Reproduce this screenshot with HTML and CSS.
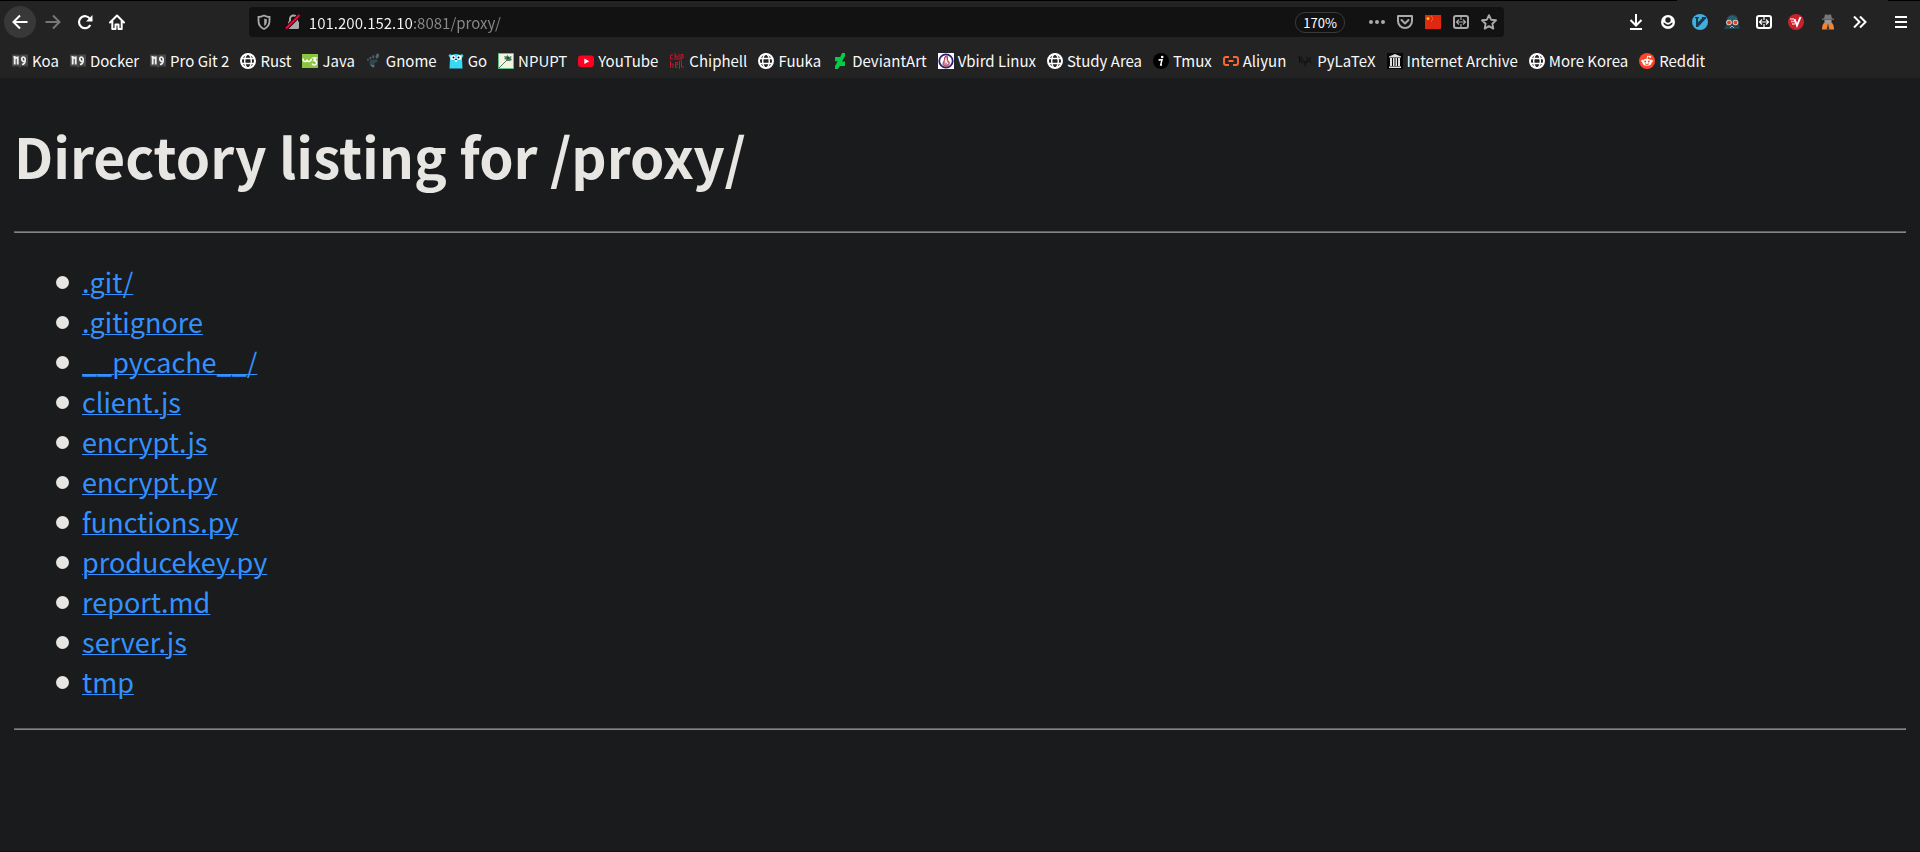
FILE: index.html
```
<!DOCTYPE html>
<html lang="en">
<head>
<meta charset="utf-8">
<title>Directory listing for /proxy/</title>
<link rel="stylesheet" href="styles.css">
</head>
<body>
<svg class="sprite" aria-hidden="true">
  <symbol id="globe" viewBox="0 0 16 16"><circle cx="8" cy="8" r="7" fill="none" stroke="#fff" stroke-width="2"/><ellipse cx="8" cy="8" rx="3.3" ry="7" fill="none" stroke="#fff" stroke-width="1.4"/><path d="M1.5 5.5h13M1.5 10.5h13" stroke="#fff" stroke-width="1.4"/></symbol>
  <symbol id="book" viewBox="0 0 16 16"><path d="M0 1.5h7l1 1 1-1h7v12H9l-1 2-1-2H0z" fill="#484848"/><path d="M2.700 4v7.500M3 5l2.700-.5v7M1.500 4h2" stroke="#eee" stroke-width="1.900" fill="none"/><path d="M13 8.500C9 9 9 4 11.500 4c2.500 0 2.500 7-1.500 7.500" stroke="#eee" stroke-width="1.700" fill="none"/></symbol>
  <symbol id="split" viewBox="0 0 16 16"><rect x="1" y="2" width="14" height="12" rx="2" fill="none" stroke="currentColor" stroke-width="2"/><path d="M8 3v3M8 10v3M3.500 8h9M6 5.500L3.500 8 6 10.500M10 5.500L12.500 8 10 10.500" fill="none" stroke="currentColor" stroke-width="1.200"/></symbol>
</svg>
<header class="chrome">
  <nav class="toolbar" aria-label="Browser toolbar">
    <button class="tool back" aria-label="Back"><svg class="icon" viewBox="0 0 16 16"><path d="M15.500 8H1.500M8 1.500L1.500 8 8 14.500" fill="none" stroke="#fff" stroke-width="2"/></svg></button>
    <button class="tool" aria-label="Forward"><svg class="icon" viewBox="0 0 16 16"><path d="M.5 8h14M8 1.500L14.500 8 8 14.500" fill="none" stroke="#777" stroke-width="2"/></svg></button>
    <button class="tool" aria-label="Reload"><svg class="icon" viewBox="0 0 16 16"><path d="M13.200 5.200A6 6 0 1 0 13.300 11" fill="none" stroke="#fff" stroke-width="2.200"/><path d="M15.500 1v6.500H9z" fill="#fff"/></svg></button>
    <button class="tool" aria-label="Home"><svg class="icon" viewBox="0 0 16 16"><path d="M1 8.500l7-7 7 7M3.300 7v8h3.200v-4.500h3V15h3.200V7" fill="none" stroke="#fff" stroke-width="2" stroke-linejoin="round" stroke-linecap="round"/></svg></button>
    <span class="spring"></span>
    <div class="urlbar">
      <svg class="icon shield" viewBox="0 0 16 16"><path d="M8 1.500C6 2.500 4 3 2.500 3v4c0 4 2 6.500 5.500 8 3.500-1.500 5.500-4 5.500-8V3C12 3 10 2.500 8 1.500z" fill="none" stroke="#aaa" stroke-width="1.800"/><path d="M8.200 4.500c1 .4 1.700.6 2.600.7v2c0 2.300-.8 3.800-2.600 4.900z" fill="#aaa"/></svg>
      <svg class="icon" viewBox="0 0 16 16"><rect x="3" y="7" width="11" height="8" rx="1.500" fill="#aaa"/><path d="M5 8V5a3.500 3.500 0 0 1 7 0v3" fill="none" stroke="#aaa" stroke-width="2"/><path d="M1 14.500L14.500 1" stroke="#121212" stroke-width="4"/><path d="M1 14.500L14.500 1" stroke="#ff0039" stroke-width="2"/></svg>
      <input class="address" type="text" aria-label="Address" value="101.200.152.10:8081/proxy/" spellcheck="false">
      <button class="zoom">170%</button>
      <button class="action" aria-label="Page actions"><svg class="icon" viewBox="0 0 16 16"><g fill="#aaa"><circle cx="2" cy="8" r="2"/><circle cx="8" cy="8" r="2"/><circle cx="14" cy="8" r="2"/></g></svg></button>
      <button class="action" aria-label="Save to Pocket"><svg class="icon" viewBox="0 0 16 16"><path d="M1 2h14v5a7 7 0 0 1-14 0z" fill="none" stroke="#aaa" stroke-width="2" stroke-linejoin="round"/><path d="M4.500 6L8 9.500 11.500 6" fill="none" stroke="#aaa" stroke-width="2" stroke-linecap="round" stroke-linejoin="round"/></svg></button>
      <button class="action" aria-label="Server location: China"><svg class="icon" viewBox="0 0 16 16"><path fill="#de2910" d="M0 1h16v14H0z"/><path fill="#ffde00" d="M3 2.500l.6 1.300H5L4 4.800l.3 1.500L3 5.500l-1.300.8L2 4.800l-1-1h1.400z"/><path d="M6 2.200h1M7 3.700h1M7 5.500h1M6 7h1" stroke="#e98b0a"/></svg></button>
      <button class="action" aria-label="Split view"><svg class="icon"><use href="#split"/></svg></button>
      <button class="action" aria-label="Bookmark this page"><svg class="icon" viewBox="0 0 16 16"><path d="M8 1.200l2.100 4.500 4.900.6-3.600 3.400.9 4.900L8 12.200l-4.300 2.400.9-4.900L1 6.300l4.900-.6z" fill="none" stroke="#aaa" stroke-width="1.900" stroke-linejoin="round"/></svg></button>
    </div>
    <span class="spring"></span>
    <button class="tool" aria-label="Downloads"><svg class="icon" viewBox="0 0 16 16"><path d="M8 0v11M2.500 6L8 11.500 13.500 6M2 15h12" fill="none" stroke="#fff" stroke-width="2"/></svg></button>
    <button class="tool" aria-label="Account"><svg class="icon" viewBox="0 0 16 16"><circle cx="8" cy="8" r="7" fill="#fff"/><circle cx="8" cy="6" r="2.700" fill="#232323"/><path d="M3.300 8.500c.7 5 8.700 5 9.400 0l-1.800.5c-1.500 2-4.300 2-5.800 0z" fill="#232323"/></svg></button>
    <button class="tool" aria-label="Vim keys"><svg class="icon" viewBox="0 0 16 16"><circle cx="8" cy="8" r="8" fill="#42aee0"/><path d="M3 3h4v1.200H6v4L10 4.200V3h4v1.500L6 13H4V4.200H3z" fill="#173b4d"/></svg></button>
    <button class="tool" aria-label="Reader mask"><svg class="icon" viewBox="0 0 16 16"><path d="M2.500 6C3 2 6 .5 9 .5s5 2.500 5 6l2 8.500H0l2-4z" fill="#24454f"/><path d="M4 4c2-3 6-3 9 0v3H3z" fill="#28606d"/><circle cx="5" cy="8.500" r="2.800" fill="#e8ded2"/><circle cx="11.500" cy="8.500" r="2.800" fill="#e8ded2"/><circle cx="5" cy="8.500" r="1.900" fill="#e83b2b"/><circle cx="11.500" cy="8.500" r="1.900" fill="#e83b2b"/><path d="M6 14l2-2 2 2" stroke="#9fb7bd" fill="none"/></svg></button>
    <button class="tool" aria-label="Tab split"><svg class="icon"><use href="#split"/></svg></button>
    <button class="tool" aria-label="Video downloader"><svg class="icon" viewBox="0 0 16 16"><circle cx="8" cy="8" r="8" fill="#c8232c"/><path d="M2 5h4M3 7.500h4M4 10h3" stroke="#f1b7ba" stroke-width="1.300"/><path d="M6.500 5l2.500 6.500L12.500 3" fill="none" stroke="#fff" stroke-width="1.900"/></svg></button>
    <button class="tool" aria-label="Proxy agent"><svg class="icon" viewBox="0 0 16 16"><path d="M5 .5h2l1 .7 1-.7h2l1 4h2v1.300H2V4.500h2z" fill="#777"/><path d="M4.500 6h7v3l-3.500 2-3.500-2z" fill="#999"/><path d="M2 15.500c0-4 1-6.500 3-7l3 2.500 3-2.500c2 .5 3 3 3 7z" fill="#ef8435"/><path d="M8 10l1.500 5.500h-3z" fill="#333"/></svg></button>
    <button class="tool" aria-label="More tools"><svg class="icon" viewBox="0 0 16 16"><path d="M2 2.500L7.500 8 2 13.500M8 2.500L13.500 8 8 13.500" fill="none" stroke="#fff" stroke-width="2"/></svg></button>
    <button class="tool menu" aria-label="Open menu"><svg class="icon" viewBox="0 0 16 16"><path d="M2 3h12M2 8h12M2 13h12" stroke="#fff" stroke-width="2"/></svg></button>
  </nav>
  <nav class="bookmarks" aria-label="Bookmarks">
    <a href="#koa"><svg class="icon"><use href="#book"/></svg>Koa</a>
    <a href="#docker"><svg class="icon"><use href="#book"/></svg>Docker</a>
    <a href="#progit"><svg class="icon"><use href="#book"/></svg>Pro Git 2</a>
    <a href="#rust"><svg class="icon"><use href="#globe"/></svg>Rust</a>
    <a href="#java"><svg class="icon" viewBox="0 0 16 16"><path fill="#8bc540" d="M0 1h16v14H0z"/><path d="M1 5.500q0 3 2 3t2-2q0 2 2 2t2.500-3M10.500 5h3.500L12 7.500q2.500 0 2.500 2.300T12 12q-1.500 0-2-1.500" fill="none" stroke="#fff" stroke-width="1.500"/></svg>Java</a>
    <a href="#gnome"><svg class="icon" viewBox="0 0 16 16"><path d="M11.500 7c-4-1-9-.5-8 3.500S8 16 9 13.500c.5-1.500-1-2-.5-3s3-.5 3-3.500z" fill="#33454f"/><g fill="#4f6773"><ellipse cx="11.300" cy="3" rx="1.600" ry="2.600" transform="rotate(20 11.300 3)"/><ellipse cx="7.300" cy="3.700" rx="1" ry="1.800"/><ellipse cx="4.500" cy="5" rx=".9" ry="1.500"/><ellipse cx="2" cy="6.800" rx=".8" ry="1.200"/></g><path d="M5 12q2 2 3 1" stroke="#819aa5" fill="none"/></svg>Gnome</a>
    <a href="#go"><svg class="icon" viewBox="0 0 16 16"><path d="M1.500 15.500L2 5 .5 2.500 2 1l2 1q4-2 8 0l2-1 1.500 1.500L14 5l.5 10.500z" fill="#38d9f5"/><circle cx="5" cy="4.500" r="2.500" fill="#fff"/><circle cx="11" cy="4.500" r="2.500" fill="#fff"/><circle cx="5.500" cy="4.500" r="1" fill="#111"/><circle cx="10.500" cy="4.500" r="1" fill="#111"/><path d="M7 6h2v1H7z" fill="#333"/><path d="M7 7h2v2H7z" fill="#eee"/></svg>Go</a>
    <a href="#npupt"><svg class="icon" viewBox="0 0 16 16"><path d="M.5.5h15v15H.5z" fill="#f1f5df" stroke="#63be83"/><path d="M1 15L9 7" stroke="#53735b" fill="none"/><path d="M6 3l2 .5L9.500 2l1.500 2 2.500-1-.5 2.500 1 1.500-2.500 1L9 8 8 6.500 6 6l1-1z" fill="#4b7a5c"/><path d="M9 4h2v2H9z" fill="#254a33"/></svg>NPUPT</a>
    <a href="#youtube"><svg class="icon" viewBox="0 0 16 16"><rect y="2.500" width="16" height="11.500" rx="3" fill="#ff0022"/><path d="M6.300 5.500v5.500l5-2.700z" fill="#fff"/></svg>YouTube</a>
    <a href="#chiphell"><svg class="icon" viewBox="0 0 16 16"><path d="M4 2H1.500v4H4M6 0v7M6 3h2v4M10 1v6M12 8V1.500h2V5h-2M1.500 8v7M1.500 11h2.500v4M8.500 14.500h-2V9.500h2V12h-2M10.500 8v8M12.500 8v6H15" fill="none" stroke="#c4172c" stroke-width="1"/></svg>Chiphell</a>
    <a href="#fuuka"><svg class="icon"><use href="#globe"/></svg>Fuuka</a>
    <a href="#deviantart"><svg class="icon" viewBox="0 0 16 16"><path d="M13 0v3L10 8.500h3V13H8l-.5.500L6 16H3v-3l2.700-4.700H3V4h5l.5-.5L10 0z" fill="#05cc47"/></svg>DeviantArt</a>
    <a href="#vbird"><svg class="icon" viewBox="0 0 16 16"><path d="M0 0h16v16H0z" fill="#fff"/><circle cx="8" cy="8" r="6.700" fill="#fff" stroke="#27207d" stroke-width="1.800"/><path d="M8.500 3C6 3 7 6 6 8s-2 4 1 5 5-2 4-4-1-1-1.500-2 1-4-1-4z" fill="#d98992" stroke="#b22b3c"/><path d="M7 7l3 4M8 5v5" stroke="#fff"/></svg>Vbird Linux</a>
    <a href="#study"><svg class="icon"><use href="#globe"/></svg>Study Area</a>
    <a href="#tmux"><svg class="icon" viewBox="0 0 16 16"><circle cx="8" cy="8" r="8" fill="#000"/><circle cx="9.200" cy="4" r="1.300" fill="#fff"/><path d="M6 6.700h3L7.700 12H9M5.500 7h2" stroke="#fff" stroke-width="1.500" fill="none"/></svg>Tmux</a>
    <a href="#aliyun"><svg class="icon" viewBox="0 0 16 16"><path d="M6 4H3Q1 4 1 6v4q0 2 2 2h3M10 4h3q2 0 2 2v4q0 2-2 2h-3M5.500 8h5" fill="none" stroke="#ff6a2a" stroke-width="1.900"/></svg>Aliyun</a>
    <a href="#pylatex"><svg class="icon" viewBox="0 0 16 16"><path d="M2.500 4v6M1 4h3q2 1.500 0 3H3l3 3.500M6 7l2 3.500L10 7M8 10v3.500M9.500 4l4.500 6M14 4l-4.500 6" fill="none" stroke="#111" stroke-width="1.100"/></svg>PyLaTeX</a>
    <a href="#archive"><svg class="icon" viewBox="0 0 16 16"><path d="M0 0h16v16H0z" fill="#080808"/><path d="M8 1l6 2.500v1H2v-1zM2 13.500h12V15H2zM3 5h2v8H3zM6 5h1.500v8H6zM8.500 5H10v8H8.500zM11 5h2v8h-2z" fill="#ddd"/></svg>Internet Archive</a>
    <a href="#korea"><svg class="icon"><use href="#globe"/></svg>More Korea</a>
    <a href="#reddit"><svg class="icon" viewBox="0 0 16 16"><circle cx="8" cy="8" r="8" fill="#ff4527"/><ellipse cx="8" cy="9.300" rx="4.600" ry="3.500" fill="#fff"/><circle cx="3.500" cy="8" r="1.300" fill="#fff"/><circle cx="12.500" cy="8" r="1.300" fill="#fff"/><path d="M8 6l.7-3 2.500.7" stroke="#fff" fill="none"/><circle cx="11.200" cy="3.800" r="1.100" fill="#fff"/><circle cx="6.200" cy="8.500" r="1" fill="#ff4527"/><circle cx="9.800" cy="8.500" r="1" fill="#ff4527"/><path d="M6 10.800q2 1.400 4 0" stroke="#ff4527" fill="none"/></svg>Reddit</a>
  </nav>
</header>
<main class="page">
  <h1>Directory listing for /proxy/</h1>
  <hr>
  <ul>
    <li><a href=".git/">.git/</a></li>
    <li><a href=".gitignore">.gitignore</a></li>
    <li><a href="__pycache__/">__pycache__/</a></li>
    <li><a href="client.js">client.js</a></li>
    <li><a href="encrypt.js">encrypt.js</a></li>
    <li><a href="encrypt.py">encrypt.py</a></li>
    <li><a href="functions.py">functions.py</a></li>
    <li><a href="producekey.py">producekey.py</a></li>
    <li><a href="report.md">report.md</a></li>
    <li><a href="server.js">server.js</a></li>
    <li><a href="tmp">tmp</a></li>
  </ul>
  <hr>
</main>
</body>
</html>
```

FILE: styles.css
```
* { box-sizing: border-box; }
html { background: #1a1b1c; }
body {
  min-height: 100vh;
  margin: 0;
  border-bottom: 1px solid #140f12;
  font-family: "Noto Sans CJK SC", "Noto Sans", sans-serif;
}
.sprite { display: none; }
.icon { display: block; flex: none; width: 16px; height: 16px; }
button {
  border: 0;
  padding: 0;
  background: none;
  color: #fff;
  font: inherit;
}

.chrome {
  padding-top: 1px;
  background: #232323 linear-gradient(90deg, #000 calc(100% - 243px), #232323 0, #232323 calc(100% - 32px), #000 0) top / 100% 1px no-repeat;
}
.toolbar {
  display: flex;
  align-items: center;
  gap: 2px;
  height: 42px;
  padding: 0 4px;
}
.tool {
  display: grid;
  place-items: center;
  flex: none;
  width: 30px;
  height: 30px;
}
.back {
  width: 32px;
  height: 32px;
  border-radius: 50%;
  background: #383838;
}
.menu { margin-left: 9px; }
.spring { flex: 1; }
.urlbar {
  display: flex;
  align-items: center;
  flex: 11;
  gap: 12px;
  height: 30px;
  padding: 0 7px;
  border-radius: 4px;
  background: #121212;
}
.address {
  flex: 1;
  min-width: 0;
  height: 30px;
  margin-left: -4px;
  padding: 0;
  border: 0;
  outline: 0;
  font: 15px/24px "Noto Sans CJK SC", sans-serif;
  color: transparent;
  background: linear-gradient(90deg, #f9f9fa 104px, #8a8a8b 104px);
  background-clip: text;
}
.shield { margin-right: 1px; }
.zoom {
  width: 50px;
  height: 21px;
  margin-right: 12px;
  border: 1px solid #3a3a3b;
  border-radius: 10px;
  font-size: 13px;
  line-height: 19px;
}
.action { color: #aaa; }

.bookmarks {
  display: flex;
  align-items: center;
  gap: 11px;
  height: 35px;
  padding: 0 12px;
  overflow: hidden;
}
.bookmarks a {
  display: flex;
  align-items: center;
  gap: 4px;
  color: #f9f9fa;
  font-size: 15px;
  line-height: 22px;
  text-decoration: none;
  white-space: nowrap;
}

.page {
  padding: 1px 14px;
  color: #e8e6e3;
  font-size: 27px;
  line-height: 40px;
}
.page h1 {
  margin: 36px 0;
  font-size: 55px;
  line-height: 80px;
}
.page hr {
  height: 2px;
  margin: 0;
  border: 1px solid;
  border-color: #5c6063 #858585 #858585 #5c6063;
}
.page ul {
  margin: 29px 0 26px;
  padding-left: 42px;
  list-style: none;
}
.page li {
  display: flex;
  align-items: center;
  gap: 13px;
}
.page li::before {
  content: "";
  width: 13px;
  height: 13px;
  border-radius: 50%;
  background: #e8e6e3;
}
.page a {
  color: #3391ff;
  text-decoration: underline 1px;
}
```
